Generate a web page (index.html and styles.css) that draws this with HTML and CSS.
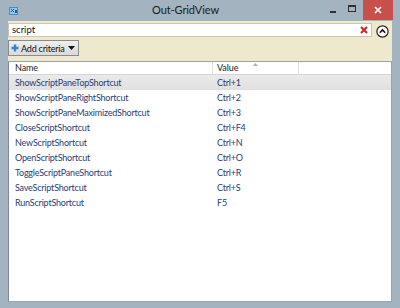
FILE: index.html
```html
<!DOCTYPE html>
<html>
<head>
<meta charset="utf-8">
<link rel="stylesheet" href="styles.css">
</head>
<body>
<div class="window">
  <div class="titlebar">
    <div class="app-icon">
      <svg width="9" height="8" viewBox="0 0 9 8"><rect x="0" y="0" width="9" height="8" fill="#3d8fd0"/><rect x="1" y="1" width="7" height="6" fill="#8cc7ee"/><path d="M2 2 L5 5 M5 2 L2 5" stroke="#1c5f9c" stroke-width="1"/><rect x="6" y="3" width="2" height="3" fill="#1c5f9c"/></svg>
    </div>
    <div class="title">Out-GridView</div>
    <div class="controls">
      <div class="ctl min"><span></span></div>
      <div class="ctl max"><span></span></div>
      <div class="ctl close">
        <svg width="8" height="8" viewBox="0 0 8 8"><path d="M1 1 L7 7 M7 1 L1 7" stroke="#fff" stroke-width="1.6"/></svg>
      </div>
    </div>
  </div>
  <div class="client">
    <div class="search-row">
      <div class="search">
        <span class="query">script</span>
        <svg class="clear" width="8" height="8" viewBox="0 0 8 8"><path d="M1 1 L7 7 M7 1 L1 7" stroke="#d42020" stroke-width="2"/></svg>
      </div>
      <div class="collapse">
        <svg width="13" height="13" viewBox="0 0 13 13"><circle cx="6.5" cy="6.5" r="5.6" fill="#fff" stroke="#222" stroke-width="1.2"/><path d="M3.8 7.8 L6.5 5 L9.2 7.8" fill="none" stroke="#111" stroke-width="1.6"/></svg>
      </div>
    </div>
    <div class="criteria-row">
      <div class="add-btn">
        <svg width="8" height="8" viewBox="0 0 8 8"><path d="M4 0.5 V7.5 M0.5 4 H7.5" stroke="#2f86d6" stroke-width="2.4"/></svg>
        <span>Add criteria</span>
        <svg width="7" height="4" viewBox="0 0 7 4"><path d="M0 0 H7 L3.5 4 Z" fill="#111"/></svg>
      </div>
    </div>
    <div class="grid">
      <div class="head">
        <div class="hcell c1">Name</div>
        <div class="hcell c2">Value<svg class="sort" width="5" height="3" viewBox="0 0 5 3"><path d="M0 3 L2.5 0 L5 3 Z" fill="#a8aeb6"/></svg></div>
        <div class="hcell c3"></div>
      </div>
      <div class="row sel"><div class="c1">ShowScriptPaneTopShortcut</div><div class="c2">Ctrl+1</div></div>
      <div class="row"><div class="c1">ShowScriptPaneRightShortcut</div><div class="c2">Ctrl+2</div></div>
      <div class="row"><div class="c1">ShowScriptPaneMaximizedShortcut</div><div class="c2">Ctrl+3</div></div>
      <div class="row"><div class="c1">CloseScriptShortcut</div><div class="c2">Ctrl+F4</div></div>
      <div class="row"><div class="c1">NewScriptShortcut</div><div class="c2">Ctrl+N</div></div>
      <div class="row"><div class="c1">OpenScriptShortcut</div><div class="c2">Ctrl+O</div></div>
      <div class="row"><div class="c1">ToggleScriptPaneShortcut</div><div class="c2">Ctrl+R</div></div>
      <div class="row"><div class="c1">SaveScriptShortcut</div><div class="c2">Ctrl+S</div></div>
      <div class="row"><div class="c1">RunScriptShortcut</div><div class="c2">F5</div></div>
    </div>
  </div>
</div>
</body>
</html>
```
FILE: styles.css
```css
html, body {
  margin: 0;
  padding: 0;
}
* {
  box-sizing: border-box;
}
body {
  width: 400px;
  height: 308px;
  background: #a3b3bf;
  font-family: Lato, "Open Sans", "DejaVu Sans", sans-serif;
  overflow: hidden;
}
.window {
  width: 400px;
  height: 308px;
  display: flex;
  flex-direction: column;
  background: #a3b3bf;
}
.titlebar {
  height: 21px;
  flex: none;
  display: flex;
  align-items: flex-start;
}
.app-icon {
  margin: 7px 0 0 9px;
  width: 9px;
  height: 8px;
  display: flex;
}
.title {
  flex: 1;
  text-align: center;
  font-size: 11px;
  letter-spacing: -0.1px;
  color: #1c1c1c;
  line-height: 20px;
  margin-left: 30px;
}
.controls {
  display: flex;
  height: 20px;
  margin-right: 7px;
}
.ctl {
  width: 19px;
  height: 20px;
  display: flex;
  align-items: center;
  justify-content: center;
}
.ctl.min span {
  width: 6px;
  height: 2px;
  background: #303030;
  margin-top: 3px;
}
.ctl.max span {
  width: 8px;
  height: 7px;
  border: 1px solid #303030;
  border-top-width: 2px;
  margin-top: -3px;
}
.ctl.close {
  width: 30px;
  background: #c7504c;
  margin-left: 2px;
}
.client {
  flex: 1;
  margin: 0 8px 6px 8px;
  background: #eee8cc;
  display: flex;
  flex-direction: column;
}
.search-row {
  display: flex;
  align-items: center;
  height: 16px;
  margin-top: 1px;
}
.search {
  flex: 1;
  height: 14px;
  background: #fff;
  border: 1px solid #c9c6b4;
  display: flex;
  align-items: center;
  padding-left: 3px;
}
.query {
  flex: 1;
  font-size: 9.5px;
  color: #111;
  line-height: 12px;
}
.clear {
  margin-right: 3px;
}
.collapse {
  width: 20px;
  display: flex;
  justify-content: center;
  padding-top: 2px;
}
.criteria-row {
  display: flex;
  padding: 2px 0 5px 0;
}
.add-btn {
  display: flex;
  align-items: center;
  gap: 2px;
  height: 16px;
  padding: 0 3px 0 2px;
  border: 1px solid #8b8b8b;
  background: linear-gradient(#efefef, #dadada);
  font-size: 9px;
  letter-spacing: -0.2px;
  color: #111;
}
.add-btn span {
  margin-right: 1px;
}
.grid {
  flex: 1;
  background: #fff;
  border: 1px solid #9aa2ab;
  border-left-color: #7f8a96;
}
.head {
  display: flex;
  height: 13px;
  border-bottom: 1px solid #d5d5d5;
  font-size: 9px;
  letter-spacing: -0.1px;
  color: #222;
}
.hcell {
  line-height: 12px;
  border-right: 1px solid #e0e0e0;
  position: relative;
}
.hcell.c1 { width: 204px; padding-left: 6px; }
.hcell.c2 { width: 86px; padding-left: 4px; }
.hcell.c3 { flex: 1; border-right: none; }
.sort {
  position: absolute;
  left: 40px;
  top: 1px;
}
.row {
  display: flex;
  height: 15px;
  line-height: 15px;
  font-size: 9px;
  letter-spacing: -0.2px;
  color: #2a3c78;
}
.row.sel {
  background: linear-gradient(#eaeaea, #e0e0e0);
}
.row .c1 {
  width: 202px;
  padding-left: 6px;
}
.row .c2 {
  padding-left: 6px;
}
```
